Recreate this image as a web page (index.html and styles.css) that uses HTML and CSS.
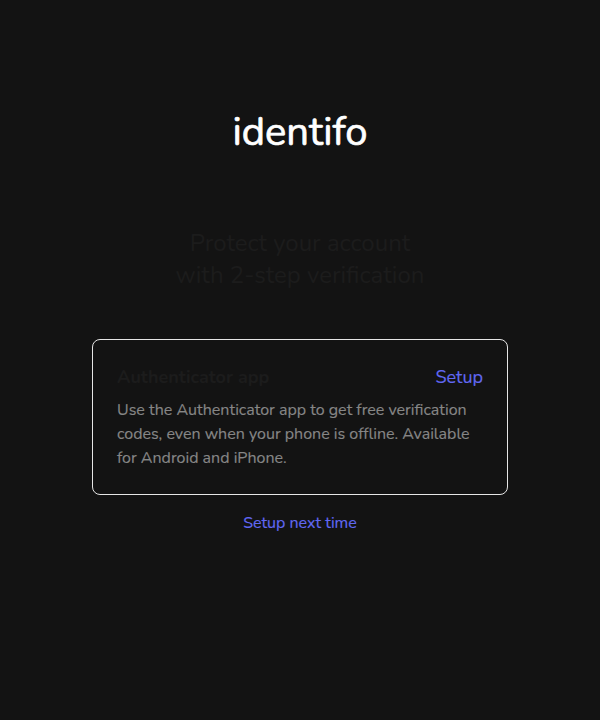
FILE: index.html
```html
<!DOCTYPE html>
<html lang="en">
<head>
<meta charset="utf-8">
<title>identifo</title>
<link rel="stylesheet" href="styles.css">
</head>
<body>
<main class="page">
  <h1 class="logo">identifo</h1>
  <h2 class="title">Protect your account<br>with 2-step verification</h2>
  <section class="card">
    <header class="card-head">
      <h3 class="card-title">Authenticator app</h3>
      <a class="link setup">Setup</a>
    </header>
    <p class="desc">Use the Authenticator app to get free verification codes, even when your phone is offline. Available for Android and iPhone.</p>
  </section>
  <a class="link next">Setup next time</a>
</main>
</body>
</html>
```
FILE: styles.css
```css
* { box-sizing: border-box; margin: 0; padding: 0; }
body {
  background: #131313;
  font-family: Nunito, "Nunito Sans", Lato, "Open Sans", sans-serif;
  color: #fff;
  -webkit-text-stroke: 0.15px currentColor;
}
.page {
  width: 416px;
  height: 720px;
  margin: 0 auto;
  padding-top: 104px;
  display: flex;
  flex-direction: column;
  align-items: center;
}
.logo {
  font-size: 40px;
  line-height: 56px;
  font-weight: 400;
  -webkit-text-stroke: 0.7px currentColor;
}
.title {
  margin-top: 67px;
  font-size: 24px;
  line-height: 32px;
  font-weight: 400;
  color: #1c1c1c;
  text-align: center;
}
.card {
  width: 416px;
  height: 156px;
  margin-top: 48px;
  padding: 25px 24px;
  border: 1px solid #e6e6e6;
  border-radius: 8px;
}
.card-head { display: flex; justify-content: space-between; line-height: 25px; }
.card-title { font-size: 18px; font-weight: 700; color: #1c1c1c; }
.link { color: #6168f2; }
.setup { font-size: 18px; }
.desc { margin-top: 8px; font-size: 16px; line-height: 24px; color: #868686; }
.next { margin-top: 16px; font-size: 16px; line-height: 24px; }
```
